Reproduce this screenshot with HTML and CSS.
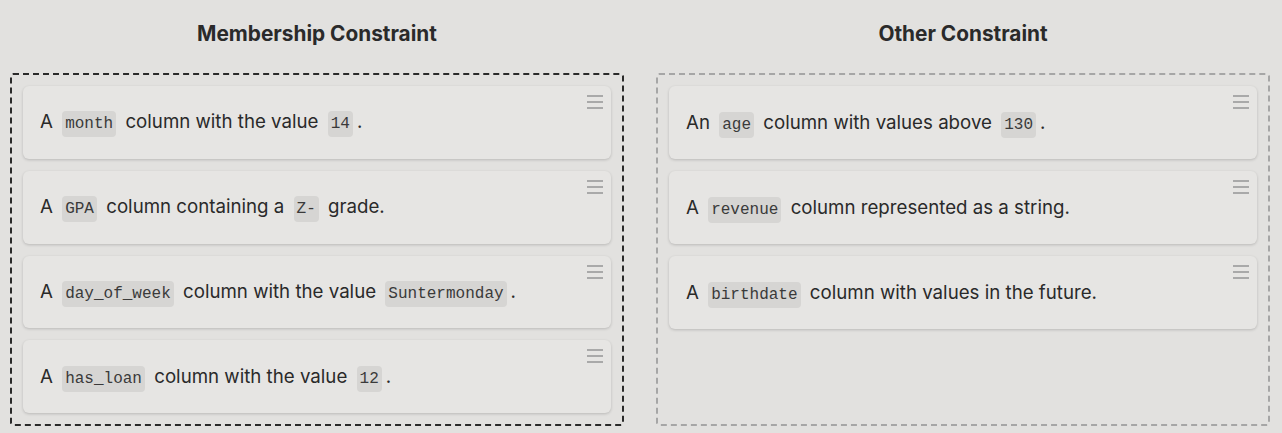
FILE: index.html
```html
<!DOCTYPE html>
<html>
<head>
<meta charset="utf-8">
<link rel="stylesheet" href="styles.css">
</head>
<body>
<div class="board">
  <section class="column">
    <h3 class="column-title">Membership Constraint</h3>
    <div class="zone zone-active">
      <div class="card"><p class="card-text">A <code>month</code> column with the value <code>14</code>.</p><span class="handle"><i></i><i></i><i></i></span></div>
      <div class="card"><p class="card-text">A <code>GPA</code> column containing a <code>Z-</code> grade.</p><span class="handle"><i></i><i></i><i></i></span></div>
      <div class="card"><p class="card-text">A <code>day_of_week</code> column with the value <code>Suntermonday</code>.</p><span class="handle"><i></i><i></i><i></i></span></div>
      <div class="card"><p class="card-text">A <code>has_loan</code> column with the value <code>12</code>.</p><span class="handle"><i></i><i></i><i></i></span></div>
    </div>
  </section>
  <section class="column">
    <h3 class="column-title">Other Constraint</h3>
    <div class="zone">
      <div class="card"><p class="card-text">An <code>age</code> column with values above <code>130</code>.</p><span class="handle"><i></i><i></i><i></i></span></div>
      <div class="card"><p class="card-text">A <code>revenue</code> column represented as a string.</p><span class="handle"><i></i><i></i><i></i></span></div>
      <div class="card"><p class="card-text">A <code>birthdate</code> column with values in the future.</p><span class="handle"><i></i><i></i><i></i></span></div>
    </div>
  </section>
</div>
</body>
</html>
```

FILE: styles.css
```css
* { box-sizing: border-box; }
html, body { margin: 0; padding: 0; }
body {
  background: #e2e1df;
  color: #2a2a2a;
  font-family: Inter, Lato, "Liberation Sans", sans-serif;
  height: 433px;
  overflow: hidden;
}
.board {
  display: grid;
  grid-template-columns: 614px 614px;
  column-gap: 32px;
  padding: 0 10px;
}
.column { display: flex; flex-direction: column; }
.column-title {
  margin: 0;
  height: 73px;
  display: flex;
  align-items: center;
  justify-content: center;
  padding-bottom: 6px;
  font-size: 20.8px;
  font-weight: 700;
  color: #2a2a2a;
}
.zone {
  border: 2px dashed #a6a6a6;
  border-radius: 3px;
  padding: 11px 11px 11px;
  height: 353px;
  display: flex;
  flex-direction: column;
  gap: 12px;
}
.zone-active { border-color: #2a2a2a; }
.card {
  position: relative;
  height: 73px;
  background: #e6e5e3;
  border-radius: 6px;
  box-shadow: 0 1px 3px rgba(0,0,0,0.18);
  display: flex;
  align-items: center;
  padding: 2px 17px 0;
}
.card-text {
  margin: 0;
  font-size: 18.7px;
  line-height: 26px;
}
code {
  font-family: "Liberation Mono", "DejaVu Sans Mono", monospace;
  font-size: 16px;
  color: #3a3a3a;
  background: #d6d5d3;
  border-radius: 4px;
  padding: 4px 3px;
  margin: 0 4px;
}
.handle {
  position: absolute;
  top: 9px;
  right: 8px;
  width: 16px;
  display: flex;
  flex-direction: column;
  gap: 4px;
}
.handle i {
  display: block;
  height: 2px;
  background: #a9a9a9;
}
```
